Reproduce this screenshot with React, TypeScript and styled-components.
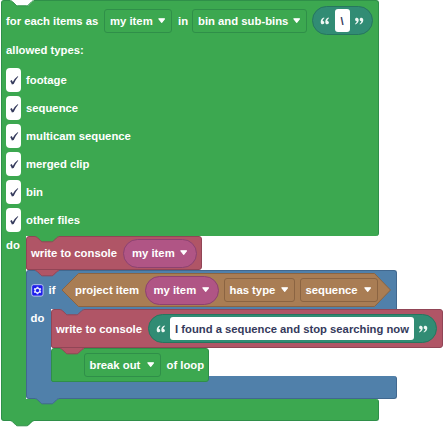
import React from "react";
import styled, { createGlobalStyle } from "styled-components";

const GREEN = "#3ca850";
const GREEN_EDGE = "#2f8f49";
const RED = "#b05566";
const RED_EDGE = "#914556";
const BLUE = "#5080aa";
const BLUE_EDGE = "#41688f";
const BROWN = "#a97d54";
const BROWN_EDGE = "#8b6442";
const PINK = "#b05585";
const PINK_EDGE = "#8c4270";
const TEAL = "#318c74";
const TEAL_EDGE = "#26765f";
const INK = "#353a5c";

const GlobalStyle = createGlobalStyle`
  html, body { margin: 0; background: #fff; overflow: hidden; }
`;

const Workspace = styled.main`
  width: 443px;
  height: 427px;
  padding-left: 1px;
  box-sizing: border-box;
  overflow: hidden;
  color: #fff;
  font: bold 11.3px/14px "Liberation Sans", Arial, sans-serif;
  white-space: nowrap;
`;

const LoopBlock = styled.section`
  position: relative;
  width: 378px;
`;

const LoopHeader = styled.div`
  position: relative;
  height: 236px;
  box-sizing: border-box;
  padding: 6px 0 0 4px;
  background: ${GREEN};
  border: 1px solid ${GREEN_EDGE};
  border-bottom: 0;
  border-radius: 3px 3px 3px 0;
`;

const Row = styled.div<{ $h: number }>`
  display: flex;
  align-items: center;
  height: ${(p) => p.$h}px;
`;

const Label = styled.span<{ $w?: number; $ml?: number }>`
  flex: none;
  width: ${(p) => (p.$w ? `${p.$w}px` : "auto")};
  margin-left: ${(p) => p.$ml ?? 0}px;
`;

const Dropdown = styled.span<{ $w: number; $edge: string; $ml?: number }>`
  display: flex;
  flex: none;
  align-items: center;
  justify-content: space-between;
  box-sizing: border-box;
  width: ${(p) => p.$w}px;
  height: 24px;
  margin-left: ${(p) => p.$ml ?? 0}px;
  padding: 0 5px;
  border: 1px solid ${(p) => p.$edge};
  border-radius: 3px;
`;

const VariablePill = styled(Dropdown)`
  height: 29px;
  padding: 0 8px;
  background: ${PINK};
  border-radius: 15px;
`;

const TextPill = styled.span<{ $w: number; $ml: number }>`
  display: flex;
  flex: none;
  align-items: center;
  justify-content: space-between;
  box-sizing: border-box;
  width: ${(p) => p.$w}px;
  height: 29px;
  margin-left: ${(p) => p.$ml}px;
  padding: 0 8px 0 7px;
  background: ${TEAL};
  border: 1px solid ${TEAL_EDGE};
  border-radius: 15px;
`;

const TextInput = styled.span<{ $w: number }>`
  display: flex;
  align-items: center;
  justify-content: center;
  width: ${(p) => p.$w}px;
  height: 23px;
  border-radius: 3px;
  background: #fff;
  color: ${INK};
  font-size: 11.25px;
`;

const CheckBox = styled.span`
  display: flex;
  align-items: center;
  justify-content: center;
  width: 15px;
  height: 24px;
  border-radius: 4px;
  background: #fff;
`;

const Body = styled.div<{ $h: number }>`
  display: flex;
  height: ${(p) => p.$h}px;
`;

const Arm = styled.div<{ $fill: string; $edge: string; $w: number }>`
  flex: none;
  box-sizing: border-box;
  width: ${(p) => p.$w}px;
  padding: 2px 0 0 4px;
  background: ${(p) => p.$fill};
  border-left: 1px solid ${(p) => p.$edge};
`;

const Stack = styled.div`
  display: flex;
  flex: none;
  flex-direction: column;
  align-items: flex-start;
`;

const Footer = styled.div<{ $fill: string; $edge: string; $h: number }>`
  box-sizing: border-box;
  height: ${(p) => p.$h}px;
  background: ${(p) => p.$fill};
  border: 1px solid ${(p) => p.$edge};
  border-top: 0;
  border-radius: 0 3px 3px 3px;
`;

const Statement = styled.div<{
  $fill: string;
  $edge: string;
  $w: number;
  $h: number;
  $pad: number;
  $open?: boolean;
}>`
  position: relative;
  z-index: 1;
  display: flex;
  flex: none;
  align-items: center;
  box-sizing: border-box;
  width: ${(p) => p.$w}px;
  height: ${(p) => p.$h}px;
  padding-left: ${(p) => p.$pad}px;
  background: ${(p) => p.$fill};
  border: 1px solid ${(p) => p.$edge};
  border-bottom-width: ${(p) => (p.$open ? 0 : 1)}px;
  border-radius: ${(p) => (p.$open ? "3px 3px 0 0" : "3px 3px 3px 2px")};
`;

const IfBlock = styled.section`
  position: relative;
  width: 371px;
`;

const Condition = styled.div`
  position: relative;
  display: flex;
  align-items: center;
  width: 331px;
  height: 34px;
  margin-left: 4px;
  padding-left: 14.5px;
  box-sizing: border-box;
`;

const ConditionShape = styled.svg`
  position: absolute;
  left: 0;
  top: 0;
`;

const ConditionContent = styled.div`
  position: relative;
  display: flex;
  align-items: center;
`;

const Tab = styled.svg<{ $end?: boolean }>`
  position: absolute;
  z-index: 2;
  left: ${(p) => (p.$end ? 9 : 8)}px;
  ${(p) => (p.$end ? "bottom: -6px;" : "top: -1px;")}
`;

/* Puzzle connector: a tab hanging below one block into the next. */
function Connector({ fill, edge, end }: { fill: string; edge: string; end?: boolean }) {
  return (
    <Tab width="25" height="7" viewBox="0 0 25 7" $end={end}>
      <path d="M.5 0H24V1L22.7 1.2L18 5.8H6.9L2 1.2L.5 1Z" fill={fill} />
      <path d="M.5 .7Q1.7.8 2.5 1.7L6 5.2Q6.6 5.8 7.5 5.8H16.6Q17.5 5.8 18.2 5.2L21.7 1.7Q22.5 .8 23.8.7" fill="none" stroke={edge} />
    </Tab>
  );
}

const Arrow = () => (
  <svg width="8" height="6" viewBox="0 0 8 6">
    <path d="M.9.8H6.5L3.7 4.3Z" fill="#fff" stroke="#fff" strokeWidth="1.1" strokeLinejoin="round" />
  </svg>
);

const Check = () => (
  <svg width="10" height="11" viewBox="0 0 10 11">
    <path d="M1.2 5.9L2.7 5.1Q3.4 6 3.8 7Q5.6 3.5 8.6 1.3L9.3 1.5Q6.3 5 4.7 9L2.9 9.4Q2.3 7.5 1.2 5.9Z" fill={INK} />
  </svg>
);

const Quote = ({ close }: { close?: boolean }) => (
  <svg width="10" height="8" viewBox="0 0 10 8">
    <g fill="#eef8f4" transform={close ? "rotate(180 5 4)" : undefined}>
      <path d="M4.1.5C2.1 1 .7 2.7.7 4.9C.7 6.4 1.4 7.3 2.6 7.3C3.6 7.3 4.3 6.6 4.3 5.6C4.3 4.6 3.6 4 2.7 4C2.7 2.9 3.3 1.9 4.4 1.2Z" />
      <path d="M8.7.5C6.7 1 5.3 2.7 5.3 4.9C5.3 6.4 6 7.3 7.2 7.3C8.2 7.3 8.9 6.6 8.9 5.6C8.9 4.6 8.2 4 7.3 4C7.3 2.9 7.9 1.9 9 1.2Z" />
    </g>
  </svg>
);

const Gear = () => (
  <svg width="13" height="13" viewBox="0 0 13 13">
    <rect x=".7" y=".7" width="11.4" height="11.4" rx="2" fill="#1c1ceb" stroke="#b9c4ed" />
    <path d="M5.7 2.7H7.3L7.6 3.8L8.4 4.2L9.5 3.9L10.3 5.3L9.5 6.1V6.9L10.3 7.7L9.5 9.1L8.4 8.8L7.6 9.2L7.3 10.3H5.7L5.4 9.2L4.6 8.8L3.5 9.1L2.7 7.7L3.5 6.9V6.1L2.7 5.3L3.5 3.9L4.6 4.2L5.4 3.8Z" fill="#e3e6ff" />
    <circle cx="6.5" cy="6.5" r="1.7" fill="#1c1ceb" />
  </svg>
);

const mediaTypes = ["footage", "sequence", "multicam sequence", "merged clip", "bin", "other files"];

export default function App() {
  return (
    <>
      <GlobalStyle />
      <Workspace>
        <LoopBlock>
          <LoopHeader>
            <Connector fill="#fff" edge={GREEN_EDGE} />
            <Row $h={27}>
              <Label $w={98}>for each items as</Label>
              <Dropdown $w={68} $edge={GREEN_EDGE}>my item<Arrow /></Dropdown>
              <Label $w={14} $ml={6}>in</Label>
              <Dropdown $w={115} $edge={GREEN_EDGE}>bin and sub-bins<Arrow /></Dropdown>
              <TextPill $w={61} $ml={5}>
                <Quote /><TextInput $w={15}>{"\\"}</TextInput><Quote close />
              </TextPill>
            </Row>
            <Row $h={32}><Label>allowed types:</Label></Row>
            {mediaTypes.map((name) => (
              <Row $h={28} key={name}>
                <CheckBox><Check /></CheckBox>
                <Label $ml={5}>{name}</Label>
              </Row>
            ))}
          </LoopHeader>
          <Body $h={163}>
            <Arm $fill={GREEN} $edge={GREEN_EDGE} $w={24.5}>do</Arm>
            <Stack>
              <Statement $fill={RED} $edge={RED_EDGE} $w={176} $h={34} $pad={4.5}>
                <Connector fill={GREEN} edge={RED_EDGE} />
                <Label $w={92}>write to console</Label>
                <VariablePill $w={74} $edge={PINK_EDGE}>my item<Arrow /></VariablePill>
              </Statement>
              <IfBlock>
                <Statement $fill={BLUE} $edge={BLUE_EDGE} $w={371} $h={39} $pad={4} $open>
                  <Connector fill={RED} edge={RED_EDGE} />
                  <Gear />
                  <Label $ml={5} $w={8}>if</Label>
                  <Condition>
                    <ConditionShape width="331" height="34">
                      <path d="M17.5.5H313.5L329.5 17L313.5 33.5H17.5L1 17Z" fill={BROWN} stroke={BROWN_EDGE} />
                    </ConditionShape>
                    <ConditionContent>
                      <Label $w={69.5}>project item</Label>
                      <VariablePill $w={74} $edge={PINK_EDGE}>my item<Arrow /></VariablePill>
                      <Dropdown $w={71} $edge={BROWN_EDGE} $ml={5}>has type<Arrow /></Dropdown>
                      <Dropdown $w={78} $edge={BROWN_EDGE} $ml={5}>sequence<Arrow /></Dropdown>
                    </ConditionContent>
                  </Condition>
                </Statement>
                <Body $h={67}>
                  <Arm $fill={BLUE} $edge={BLUE_EDGE} $w={25}>do</Arm>
                  <Stack>
                    <Statement $fill={RED} $edge={RED_EDGE} $w={392} $h={39} $pad={4.5}>
                      <Connector fill={BLUE} edge={RED_EDGE} />
                      <Label $w={92}>write to console</Label>
                      <TextPill $w={289} $ml={0}>
                        <Quote />
                        <TextInput $w={244}>I found a sequence and stop searching now</TextInput>
                        <Quote close />
                      </TextPill>
                    </Statement>
                    <Statement $fill={GREEN} $edge={GREEN_EDGE} $w={158} $h={34} $pad={32}>
                      <Connector fill={RED} edge={RED_EDGE} />
                      <Dropdown $w={77} $edge={GREEN_EDGE}>break out<Arrow /></Dropdown>
                      <Label $ml={6}>of loop</Label>
                    </Statement>
                  </Stack>
                </Body>
                <Footer $fill={BLUE} $edge={BLUE_EDGE} $h={23} />
                <Connector fill={BLUE} edge={BLUE_EDGE} end />
              </IfBlock>
            </Stack>
          </Body>
          <Footer $fill={GREEN} $edge={GREEN_EDGE} $h={22} />
          <Connector fill={GREEN} edge={GREEN_EDGE} end />
        </LoopBlock>
      </Workspace>
    </>
  );
}
